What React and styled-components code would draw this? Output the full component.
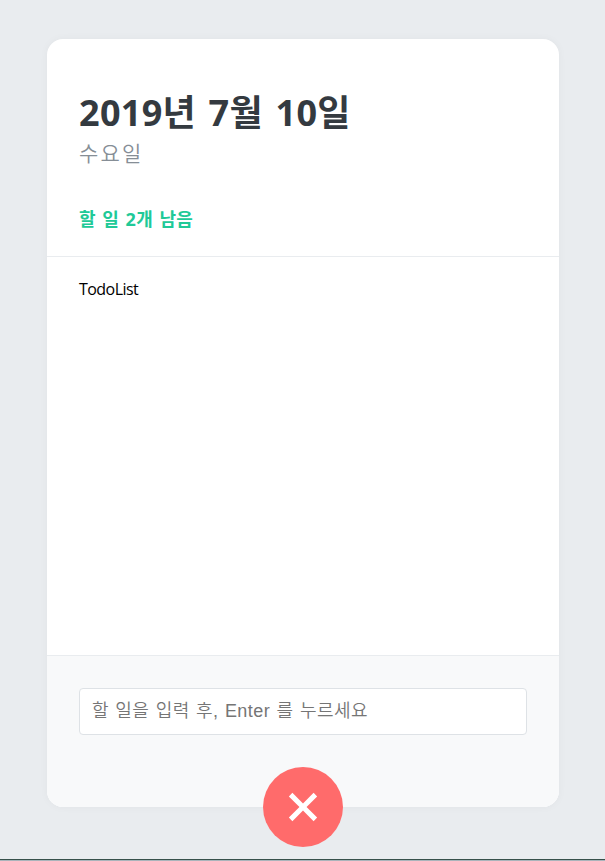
import React from 'react';
import styled, { createGlobalStyle } from 'styled-components';
import { MdAdd } from 'react-icons/md';

const GlobalStyle = createGlobalStyle`
  body {
    margin: 0;
    background: #e9ecef;
    font-family: 'Open Sans', 'Noto Sans CJK KR', sans-serif;
  }
`;

const Page = styled.div`
  display: flex;
  flex-direction: column;
  height: 861px;
  box-sizing: border-box;
  padding-top: 39px;
  overflow: hidden;
`;

const PageEdge = styled.div`
  height: 1px;
  margin-top: auto;
  background: #36504a;
  border-bottom: 1px solid #aab4bb;
`;

const TodoTemplateBlock = styled.div`
  width: 512px;
  height: 768px;
  position: relative;
  background: white;
  border-radius: 16px;
  box-shadow: 0 0 8px 0 rgba(0, 0, 0, 0.04);
  margin: 0 46px 0 47px;
  display: flex;
  flex-direction: column;
`;

const TodoHeadBlock = styled.div`
  height: 217px;
  border-bottom: 1px solid #e9ecef;
  padding: 0 32px;

  h1 {
    margin: 0;
    padding-top: 50px;
    font-size: 36px;
    line-height: 48px;
    letter-spacing: 0.3px;
    word-spacing: 3px;
    color: #343a40;
  }
  .day {
    margin-top: 2px;
    color: #868e96;
    font-size: 21px;
    line-height: 28px;
    font-weight: 350;
    letter-spacing: 2.2px;
  }
  .tasks-left {
    color: #20c997;
    font-size: 18px;
    line-height: 24px;
    margin-top: 40px;
    font-weight: bold;
    letter-spacing: 0.4px;
    word-spacing: 1.2px;
  }
`;

const TodoListBlock = styled.div`
  flex: 1;
  padding: 22px 32px 48px;
  font-size: 16px;
  line-height: 21px;
  letter-spacing: -0.55px;
  color: black;
`;

const InsertForm = styled.form`
  background: #f8f9fa;
  height: 152px;
  padding: 32px;
  box-sizing: border-box;
  border-bottom-left-radius: 16px;
  border-bottom-right-radius: 16px;
  border-top: 1px solid #e9ecef;
`;

const Input = styled.input`
  display: block;
  width: 100%;
  height: 47px;
  padding: 12px;
  border-radius: 4px;
  border: 1px solid #dee2e6;
  outline: none;
  font-family: 'Liberation Sans', 'Noto Sans CJK KR', sans-serif;
  font-size: 18px;
  font-weight: 350;
  letter-spacing: 0.45px;
  word-spacing: 0.9px;
  box-sizing: border-box;

  &::placeholder {
    color: #757575;
    opacity: 1;
  }
`;

const CircleButton = styled.button`
  background: #ff6b6b;
  width: 80px;
  height: 80px;
  padding: 0;
  display: flex;
  align-items: center;
  justify-content: center;
  position: absolute;
  left: 50%;
  bottom: 0;
  transform: translate(-50%, 50%) rotate(45deg);
  font-size: 60px;
  color: white;
  border-radius: 50%;
  border: none;
  outline: none;
  cursor: pointer;
`;

function TodoHead() {
  return (
    <TodoHeadBlock>
      <h1>2019년 7월 10일</h1>
      <div className="day">수요일</div>
      <div className="tasks-left">할 일 2개 남음</div>
    </TodoHeadBlock>
  );
}

function TodoList() {
  return <TodoListBlock>TodoList</TodoListBlock>;
}

function TodoCreate() {
  return (
    <>
      <InsertForm onSubmit={e => e.preventDefault()}>
        <Input placeholder="할 일을 입력 후, Enter 를 누르세요" />
      </InsertForm>
      <CircleButton>
        <MdAdd />
      </CircleButton>
    </>
  );
}

function App() {
  return (
    <>
      <GlobalStyle />
      <Page>
        <TodoTemplateBlock>
          <TodoHead />
          <TodoList />
          <TodoCreate />
        </TodoTemplateBlock>
        <PageEdge />
      </Page>
    </>
  );
}

export default App;
